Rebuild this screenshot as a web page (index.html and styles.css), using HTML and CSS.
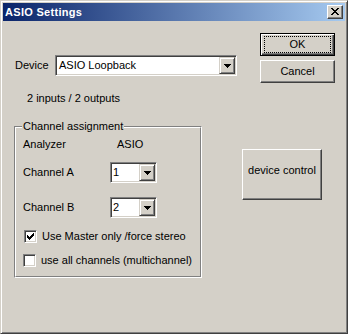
FILE: index.html
```html
<!DOCTYPE html>
<html lang="en">
<head>
    <meta charset="UTF-8">
    <title>ASIO Settings</title>
    <link rel="stylesheet" href="styles.css">
</head>
<body>
    <div class="window">
        <div class="titlebar">
            <span class="title">ASIO Settings</span>
            <button type="button" class="close">
                <svg width="8" height="7" viewBox="0 0 8 7" shape-rendering="crispEdges">
                    <path d="M0 0h2v1H0zM6 0h2v1H6zM1 1h2v1H1zM5 1h2v1H5zM2 2h4v1H2zM3 3h2v1H3zM2 4h4v1H2zM1 5h2v1H1zM5 5h2v1H5zM0 6h2v1H0zM6 6h2v1H6z" fill="#000"/>
                </svg>
            </button>
        </div>

        <div class="client">
            <div class="main">
                <div class="device-row">
                    <span class="device-label">Device</span>
                    <div class="combo combo-device">
                        <span class="value">ASIO Loopback</span>
                        <span class="drop">
                            <svg width="7" height="4" viewBox="0 0 7 4" shape-rendering="crispEdges"><path d="M0 0h7v1H0zM1 1h5v1H1zM2 2h3v1H2zM3 3h1v1H3z" fill="#000"/></svg>
                        </span>
                    </div>
                </div>

                <p class="info">2 inputs / 2 outputs</p>

                <!-- Channel assignment group -->
                <div class="group">
                    <div class="group-inner">
                        <span class="legend">Channel assignment</span>

                        <div class="row row-head">
                            <span class="col-head">Analyzer</span>
                            <span>ASIO</span>
                        </div>

                        <div class="row row-a">
                            <span class="col-label">Channel A</span>
                            <div class="combo combo-small">
                                <span class="value">1</span>
                                <span class="drop">
                                    <svg width="7" height="4" viewBox="0 0 7 4" shape-rendering="crispEdges"><path d="M0 0h7v1H0zM1 1h5v1H1zM2 2h3v1H2zM3 3h1v1H3z" fill="#000"/></svg>
                                </span>
                            </div>
                        </div>

                        <div class="row row-b">
                            <span class="col-label">Channel B</span>
                            <div class="combo combo-small">
                                <span class="value">2</span>
                                <span class="drop">
                                    <svg width="7" height="4" viewBox="0 0 7 4" shape-rendering="crispEdges"><path d="M0 0h7v1H0zM1 1h5v1H1zM2 2h3v1H2zM3 3h1v1H3z" fill="#000"/></svg>
                                </span>
                            </div>
                        </div>

                        <label class="check check-master">
                            <span class="box">
                                <svg width="7" height="7" viewBox="0 0 7 7" shape-rendering="crispEdges"><path d="M6 0h1v1H6zM5 1h2v1H5zM0 2h1v1H0zM4 2h3v1H4zM0 3h2v1H0zM3 3h3v1H3zM0 4h5v1H0zM1 5h3v1H1zM2 6h1v1H2z" fill="#000"/></svg>
                            </span>
                            Use Master only /force stereo
                        </label>

                        <label class="check check-all">
                            <span class="box"></span>
                            use all channels (multichannel)
                        </label>
                    </div>
                </div>
            </div>

            <div class="side">
                <button type="button" class="btn btn-ok"><span class="focus">OK</span></button>
                <button type="button" class="btn btn-cancel">Cancel</button>
                <button type="button" class="btn btn-device">device control</button>
            </div>
        </div>
    </div>
</body>
</html>
```

FILE: styles.css
```css
body {
    margin: 0;
    font-family: "Liberation Sans", Arial, sans-serif;
    font-size: 11px;
    line-height: 13px;
    color: #000;
    background: #d4d0c8;
    overflow: hidden;
}
.window {
    width: 348px;
    height: 334px;
    box-sizing: border-box;
    padding: 1px;
    background: #d4d0c8;
    border: 1px solid;
    border-color: #d4d0c8 #404040 #404040 #d4d0c8;
    box-shadow: inset 1px 1px #fff, inset -1px -1px #808080;
    display: flex;
    flex-direction: column;
}
.titlebar {
    height: 18px;
    margin: 1px 0 0 1px;
    width: 342px;
    display: flex;
    align-items: center;
    justify-content: space-between;
    background: linear-gradient(to right, #0a246a, #a6caf0);
}
.title {
    padding-left: 2px;
    color: #fff;
    font-weight: bold;
    letter-spacing: 0.3px;
}
.close {
    width: 16px;
    height: 14px;
    margin-right: 2px;
    padding: 0;
    box-sizing: border-box;
    background: #d4d0c8;
    border: 1px solid;
    border-color: #fff #404040 #404040 #fff;
    box-shadow: inset -1px -1px #808080;
    display: flex;
    align-items: center;
    justify-content: center;
}
.close svg {
    margin: 0 1px 1px 0;
}
.client {
    display: flex;
    margin-left: 1px;
}
.main {
    width: 239px;
    box-sizing: border-box;
    padding-left: 12px;
}
.device-row {
    margin-top: 34px;
    display: flex;
    align-items: center;
}
.device-label {
    width: 40px;
}

/* sunken combo box */
.combo {
    display: flex;
    box-sizing: border-box;
    padding: 1px;
    background: #fff;
    border: 1px solid;
    border-color: #808080 #fff #fff #808080;
    box-shadow: inset 1px 1px #404040, inset -1px -1px #d4d0c8;
}
.combo .value {
    flex: 1;
    padding-left: 2px;
    display: flex;
    align-items: center;
}
.combo .drop {
    width: 16px;
    box-sizing: border-box;
    background: #d4d0c8;
    border: 1px solid;
    border-color: #d4d0c8 #404040 #404040 #d4d0c8;
    box-shadow: inset 1px 1px #fff, inset -1px -1px #808080;
    display: flex;
    align-items: center;
    justify-content: center;
}
.combo-device {
    width: 182px;
    height: 21px;
}
.combo-small {
    width: 47px;
    height: 21px;
}
.combo-small .value {
    padding-left: 1px;
}
.info {
    margin: 16px 0 0 12px;
}

/* etched group box */
.group {
    width: 188px;
    margin: 21px 0 0 -1px;
    box-sizing: border-box;
    border: 1px solid;
    border-color: #808080 #fff #fff #808080;
}
.group-inner {
    border: 1px solid;
    border-color: #fff #808080 #808080 #fff;
    padding: 0 0 9px 7px;
}
.legend {
    display: block;
    width: max-content;
    margin: -8px 0 0 -1px;
    padding: 0 1px;
    background: #d4d0c8;
}
.row {
    display: flex;
    align-items: center;
}
.row-head {
    margin-top: 5px;
}
.col-head {
    width: 94px;
}
.col-label {
    width: 87px;
}
.row-a {
    margin-top: 11px;
}
.row-b {
    margin-top: 14px;
}
.check {
    display: flex;
    align-items: center;
    gap: 5px;
    height: 13px;
}
.check-master {
    margin: 12px 0 0 1px;
}
.check-all {
    margin-top: 11px;
}
.box {
    width: 13px;
    height: 13px;
    box-sizing: border-box;
    padding: 2px;
    background: #fff;
    border: 1px solid;
    border-color: #808080 #fff #fff #808080;
    box-shadow: inset 1px 1px #404040, inset -1px -1px #d4d0c8;
    display: flex;
    align-items: center;
    justify-content: center;
}

/* push buttons */
.side {
    display: flex;
    flex-direction: column;
    align-items: flex-start;
}
.btn {
    font: inherit;
    color: #000;
    padding: 0;
    box-sizing: border-box;
    background: #d4d0c8;
    border: 1px solid;
    border-color: #fff #404040 #404040 #fff;
    box-shadow: inset -1px -1px #808080;
    display: flex;
    align-items: center;
    justify-content: center;
}
.btn-ok {
    width: 75px;
    height: 23px;
    margin: 12px 0 0 18px;
    padding: 2px;
    border-color: #000;
    box-shadow: inset 1px 1px #fff, inset -1px -1px #404040, inset -2px -2px #808080;
}
.focus {
    width: 100%;
    height: 100%;
    margin: 1px;
    box-sizing: border-box;
    border: 1px dotted #000;
    display: flex;
    align-items: center;
    justify-content: center;
}
.btn-cancel {
    width: 75px;
    height: 23px;
    margin: 4px 0 0 18px;
}
.btn-device {
    width: 80px;
    height: 51px;
    margin-top: 66px;
    padding-bottom: 8px;
}
```
